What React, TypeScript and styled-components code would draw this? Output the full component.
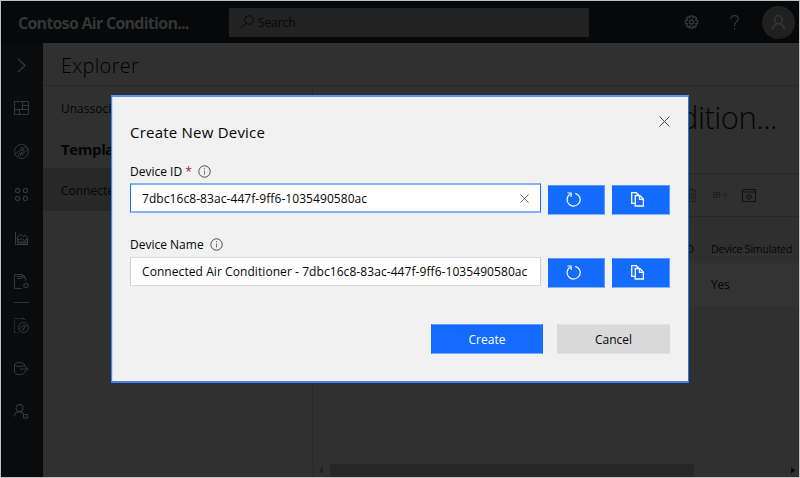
import React from "react";
import styled, { createGlobalStyle } from "styled-components";

const GlobalStyle = createGlobalStyle`
  * { box-sizing: border-box; }
  html, body { margin: 0; padding: 0; overflow: hidden; background: #303030; }
  body { font-family: "Open Sans", "Noto Sans", sans-serif; font-size: 12px; color: #000; }
  button, input { font-family: inherit; margin: 0; }
  svg { display: block; flex: none; }
`;

type TextProps = { $size: number; $spacing?: number; $weight?: number; $color?: string; $shift?: number };

const Text = styled.span<TextProps>`
  display: block;
  white-space: nowrap;
  line-height: 20px;
  font-size: ${(p) => p.$size}px;
  letter-spacing: ${(p) => p.$spacing ?? 0}px;
  font-weight: ${(p) => p.$weight ?? 400};
  color: ${(p) => p.$color ?? "#050505"};
  margin-top: ${(p) => p.$shift ?? 0}px;
`;

const Frame = styled.div`
  position: relative;
  width: 800px;
  height: 478px;
  border: 1px solid #bfc1c1;
  display: flex;
  flex-direction: column;
  overflow: hidden;
`;

const Header = styled.header`
  height: 42px;
  flex: none;
  display: flex;
  align-items: center;
  background: #060809;
`;

const Brand = styled.div`
  width: 228px;
  padding-left: 17px;
`;

const SearchBox = styled.div`
  width: 360px;
  height: 29px;
  display: flex;
  align-items: center;
  gap: 4px;
  padding-left: 11px;
  background: #222;
  border-radius: 1px;
`;

const HeaderActions = styled.div`
  flex: 1;
  display: flex;
  justify-content: flex-end;
  align-items: center;
  padding-right: 4px;
`;

const HelpSlot = styled.div`
  width: 9px;
  margin: 0 23px 0 31px;
`;

const Avatar = styled.div`
  width: 33px;
  height: 33px;
  border-radius: 50%;
  background: #202020;
  display: flex;
  align-items: center;
  justify-content: center;
`;

const Body = styled.div`
  flex: 1;
  display: flex;
  min-height: 0;
`;

const Rail = styled.nav`
  width: 42px;
  flex: none;
  background: #090b0d;
  display: flex;
  flex-direction: column;
  align-items: center;
  padding-right: 2px;
`;

const RailItem = styled.div<{ $height?: number }>`
  height: ${(p) => p.$height ?? 43}px;
  flex: none;
  display: flex;
  align-items: center;
`;

const RailDivider = styled.div`
  width: 15px;
  height: 1px;
  flex: none;
  background: #303030;
`;

const Workspace = styled.div`
  flex: 1;
  display: flex;
  flex-direction: column;
  background: #303030;
  min-width: 0;
`;

const PageTitle = styled.div`
  height: 43px;
  border-bottom: 1px solid #292929;
  padding: 13px 0 0 18px;
`;

const Columns = styled.div`
  flex: 1;
  display: flex;
  min-height: 0;
`;

const TemplateList = styled.div`
  width: 270px;
  flex: none;
  border-right: 1px solid #292929;
`;

const TemplateRow = styled.div<{ $height: number; $selected?: boolean }>`
  height: ${(p) => p.$height}px;
  display: flex;
  align-items: center;
  padding-left: 18px;
  background: ${(p) => (p.$selected ? "#282828" : "transparent")};
`;

const DevicePane = styled.div`
  flex: 1;
  display: flex;
  flex-direction: column;
  min-width: 0;
`;

const DeviceTitle = styled.div`
  height: 87px;
  display: flex;
  justify-content: flex-end;
  align-items: flex-start;
  padding: 21px 22px 0 0;
`;

const Toolbar = styled.div`
  height: 44px;
  border-top: 1px solid #282828;
  border-bottom: 1px solid #282828;
  display: flex;
  align-items: center;
  justify-content: flex-end;
  gap: 14px;
  padding-right: 43px;
`;

const TrashSlot = styled.div`
  margin-right: 2px;
`;

const TableRow = styled.div<{ $height: number; $body?: boolean }>`
  height: ${(p) => p.$height}px;
  display: grid;
  grid-template-columns: 1fr 88px;
  align-items: center;
  background: ${(p) => (p.$body ? "#333333" : "#2f2f2f")};
`;

const IdCell = styled.div`
  display: flex;
  justify-content: flex-end;
  padding-right: 17px;
`;

const Scrollbar = styled.div`
  margin-top: auto;
  height: 14px;
  display: flex;
  align-items: center;
  padding: 0 4px 0 6px;
`;

const Thumb = styled.div`
  width: 364px;
  height: 13px;
  margin: 0 auto 0 7px;
  background: #262626;
`;

const Dialog = styled.section`
  position: absolute;
  left: 110px;
  top: 94px;
  width: 578px;
  height: 288px;
  background: #f1f1f1;
  border: 2px solid;
  border-color: #5b93f2 #2471f8 #4484ec #4484ec;
  border-left-width: 1px;
  border-right-width: 1px;
  box-shadow: inset 1px 0 #c8dcfc;
  padding: 15px 18px 0 18px;
`;

const DialogTop = styled.div`
  height: 48px;
  display: flex;
  justify-content: space-between;
  align-items: flex-start;
`;

const CloseButton = styled.button`
  border: 0;
  background: none;
  padding: 4px 0 0;
`;

const FieldLabel = styled.label<{ $raised?: boolean }>`
  height: 23px;
  padding-bottom: ${(p) => (p.$raised ? 2 : 0)}px;
  display: flex;
  align-items: center;
`;

const Required = styled.span`
  width: 7px;
  margin-left: 3px;
  line-height: 20px;
  font-size: 12px;
  color: #a4262c;
`;

const InfoSlot = styled.span`
  margin-left: 6px;
`;

const FieldRow = styled.div<{ $height: number }>`
  height: ${(p) => p.$height}px;
  display: flex;
  align-items: flex-start;
`;

const InputBox = styled.div<{ $focused?: boolean }>`
  width: 411px;
  height: ${(p) => (p.$focused ? 30 : 29)}px;
  display: flex;
  align-items: center;
  justify-content: space-between;
  padding: 0 11px 0 11px;
  background: #fff;
  border-style: solid;
  border-width: ${(p) => (p.$focused ? "2px 1px" : "1px")};
  border-color: ${(p) => (p.$focused ? "#85b2fc #1a6efc" : "#dadada #cecece")};
`;

const IconButton = styled.button<{ $width: number; $top: number }>`
  width: ${(p) => p.$width}px;
  height: 30px;
  margin: ${(p) => p.$top}px 0 0 7px;
  display: flex;
  align-items: center;
  justify-content: center;
  padding: 0 7px 1px 0;
  border: 1px solid;
  border-color: #5d9aff #5d9aff #8cb5fb #136cff;
  background: #136cff;
`;

const DialogActions = styled.div`
  display: flex;
  justify-content: flex-end;
  gap: 14px;
`;

const ActionButton = styled.button<{ $primary?: boolean }>`
  width: ${(p) => (p.$primary ? 112 : 113)}px;
  height: 30px;
  padding: 1px 0 0;
  display: flex;
  align-items: center;
  justify-content: center;
  border: 1px solid;
  border-color: ${(p) => (p.$primary ? "#5d9aff #136cff #7aabfc" : "#e3e3e3 #d9d9d9")};
  background: ${(p) => (p.$primary ? "#136cff" : "#d9d9d9")};
`;

const Icon = ({ w, h, color = "#363838", sw = 1, vb, children }: {
  w: number; h: number; color?: string; sw?: number; vb?: string; children: React.ReactNode;
}) => (
  <svg width={w} height={h} viewBox={vb ?? `0 0 ${w} ${h}`} fill="none" stroke={color} strokeWidth={sw}>
    {children}
  </svg>
);

const Gear = ({ size, color }: { size: number; color: string }) => (
  <Icon w={size} h={size} color={color} sw={1.3}>
    <path d="M6.3.8h2.400l.4 2 1.700-1.200 1.800 1.800-1.200 1.700 2.100.4v2.900l-2.100.4 1.200 1.700-1.800 1.800-1.700-1.200-.4 2.100H6.300l-.4-2.100-1.700 1.200-1.800-1.800 1.200-1.700-2.100-.4V5.500l2.100-.4-1.200-1.700 1.800-1.800 1.700 1.200z" />
    <circle cx="7.5" cy="7" r="2" />
  </Icon>
);

const Cross = ({ size, color }: { size: number; color: string }) => (
  <Icon w={size} h={size} vb="0 0 11 11" color={color}><path d="M.5.5l10 10M10.5.5l-10 10" /></Icon>
);

const Info = () => (
  <Icon w={13} h={13} color="#4b4b4b">
    <circle cx="6.5" cy="6.5" r="5.7" />
    <path d="M6.5 5.500v4M6.5 3v1.300" stroke="#777" />
  </Icon>
);

const RefreshIcon = () => (
  <Icon w={15} h={15} color="#fff" sw={1.2}>
    <path d="M9.300 1.300A6.500 6.500 0 1 1 4.300 2" />
    <path d="M1.500 1h3.600v4" />
  </Icon>
);

const CopyIcon = () => (
  <Icon w={13} h={15} color="#fff" sw={1.3}>
    <path d="M4 11.400H.7V.7h4.600L7.600 3" />
    <path d="M4.300 3.500h4.500l3.600 3.600v6.900H4.300z" />
    <path d="M8.500 3.700v3.700h3.700" />
  </Icon>
);

const Field = ({ label, value, required, focused, spacing }: {
  label: string; value: string; required?: boolean; focused?: boolean; spacing: number;
}) => (
  <>
    <FieldLabel $raised={!focused}>
      <Text $size={12}>{label}</Text>
      {required && <Required>*</Required>}
      <InfoSlot><Info /></InfoSlot>
    </FieldLabel>
    <FieldRow $height={focused ? 51 : 67}>
      <InputBox $focused={focused}>
        <Text $size={12} $spacing={spacing} $shift={1}>{value}</Text>
        {focused && <Cross size={9} color="#555" />}
      </InputBox>
      <IconButton $width={57} $top={focused ? 2 : 1} aria-label={`Regenerate ${label}`}><RefreshIcon /></IconButton>
      <IconButton $width={58} $top={focused ? 2 : 1} aria-label={`Copy ${label}`}><CopyIcon /></IconButton>
    </FieldRow>
  </>
);

export default function App() {
  return (
    <Frame>
      <GlobalStyle />
      <Header>
        <Brand><Text $size={16} $spacing={-0.74} $weight={700} $color="#343636" $shift={1}>Contoso Air Condition...</Text></Brand>
        <SearchBox>
          <Icon w={14} h={14} color="#080808"><circle cx="9" cy="5" r="4.3" /><path d="M6 8L.5 13.500" /></Icon>
          <Text $size={12} $spacing={-0.1} $color="#080808" $shift={2}>Search</Text>
        </SearchBox>
        <HeaderActions>
          <Gear size={15} color="#363838" />
          <HelpSlot>
            <Icon w={9} h={15} sw={1.2}><path d="M.7 3.800C1 1.700 2.300.7 4.500.7c2.300 0 3.700 1.200 3.700 3.100 0 3-3.700 3.300-3.700 6.200v1M4.500 13v1.600" /></Icon>
          </HelpSlot>
          <Avatar>
            <Icon w={13} h={15} color="#383a3a" sw={1.3}><circle cx="6.5" cy="4.7" r="4" /><path d="M.7 14.500c0-3.600 2.500-5.800 5.800-5.800s5.800 2.200 5.800 5.800" /></Icon>
          </Avatar>
        </HeaderActions>
      </Header>
      <Body>
        <Rail>
          <RailItem $height={44}><Icon w={9} h={15} sw={1.2}><path d="M1 .7l7 6.800-7 6.800" /></Icon></RailItem>
          <RailItem $height={42}><Icon w={15} h={14}><path d="M.5.5h14v13H.5zM8.500.5v8M.5 8.500h14M5.500 8.500v5M8.500 4.500h6" /></Icon></RailItem>
          <RailItem $height={44}>
            <Icon w={15} h={15}><circle cx="7.5" cy="7.5" r="7" /><circle cx="8" cy="4.7" r="1.3" /><circle cx="7.5" cy="10.5" r="1.3" /><path d="M1 10l6-4.300M12.500 2L9 5.500v2L4.500 10.500v2M8.500 9.700L14 5.500" /></Icon>
          </RailItem>
          <RailItem>
            <Icon w={13} h={13} sw={1.1}>{[2.6, 10.4].map((x) => [2.6, 10.4].map((y) => <circle key={`${x}-${y}`} cx={x} cy={y} r="2.1" />))}</Icon>
          </RailItem>
          <RailItem $height={44}>
            <Icon w={13} h={13} color="#3a3b3b"><path d="M.5 0v12.500H13" /><path d="M2.500 11V5l3-3 2.500 2.500 2-1.500 2.500 2.500V11z" /><path d="M2.500 7l2 1 2-1.500 3 2 3-1.500M3 10h9" /></Icon>
          </RailItem>
          <RailItem $height={42}>
            <Icon w={15} h={15}><path d="M8 14.500H.5V.5h8l3 3V7M2.500 2.500h6M3 4.500h5M8.500.5v3h3" /><circle cx="12" cy="11.5" r="2" /><path d="M12 8.500v1M12 13.500v1M9 11.500h1M14 11.500h1M10 9.500l.6.6M14 9.500l-.6.6M10 13.500l.6-.6M14 13.500l-.6-.6" /></Icon>
          </RailItem>
          <RailDivider />
          <RailItem $height={44}>
            <Icon w={15} h={15}><path d="M9 .5H.5V14.500H4" strokeDasharray="1.5 1" /><circle cx="9.5" cy="9.5" r="5" /><circle cx="10" cy="7.5" r=".7" /><circle cx="9" cy="11.5" r=".7" /><path d="M5 11l4.500-3.500M13 7l-4 4.500M9 .5l2 1.500" /></Icon>
          </RailItem>
          <RailItem>
            <Icon w={15} h={13}><ellipse cx="5.5" cy="2.5" rx="5" ry="2" /><path d="M.5 2.500v8c0 1.200 2.200 2 5 2s5-.8 5-2V9.500M10.500 2.500v2M6 7h8M11 4l3 3-3 3" /></Icon>
          </RailItem>
          <RailItem>
            <Icon w={14} h={15} sw={1.1}><circle cx="5.5" cy="4" r="3.4" /><path d="M.6 12.500C.6 9.500 2.500 7.600 5.500 7.600c2 0 3 .8 4 2M9.500 10.500h4v3.500h-4z" /></Icon>
          </RailItem>
        </Rail>
        <Workspace>
          <PageTitle><Text $size={20} $spacing={0.3} $weight={300} $color="#000">Explorer</Text></PageTitle>
          <Columns>
            <TemplateList>
              <TemplateRow $height={44}><Text $size={12} $spacing={0} $shift={1}>Unassociated devices</Text></TemplateRow>
              <TemplateRow $height={38}><Text $size={15} $spacing={-0.4} $weight={700}>Templates</Text></TemplateRow>
              <TemplateRow $height={43} $selected><Text $size={12} $spacing={0} $shift={2}>Connected Air Conditioner</Text></TemplateRow>
            </TemplateList>
            <DevicePane>
              <DeviceTitle><Text $size={31} $spacing={-0.5} $weight={300}>Connected Air Condition...</Text></DeviceTitle>
              <Toolbar>
                <TrashSlot>
                  <Icon w={11} h={14} color="#202020"><path d="M0 2.500h11M3.500 2V.5h4V2M1.500 3v10.500h8V3M3.500 5v6.500M5.500 5v6.500M7.500 5v6.500" /></Icon>
                </TrashSlot>
                <Icon w={15} h={9} color="#202020"><path d="M.5 1.500h6v5h-6zM3.500 1.500v5M.5 4h6M8 4h6M11.500 1.500L14 4l-2.500 2.500" /></Icon>
                <Icon w={14} h={13} color="#101010"><path d="M.5.5h13v12H.5zM.5 3h13" /><circle cx="7" cy="7.7" r="2" /><path d="M7 5v1M7 9.500v1M4.500 7.700h1M8.700 7.700h1" /></Icon>
              </Toolbar>
              <TableRow $height={46}>
                <IdCell><Text $size={10.5} $shift={18}>Device ID</Text></IdCell>
                <Text $size={10.5} $spacing={-0.18} $shift={18}>Device Simulated</Text>
              </TableRow>
              <TableRow $height={43} $body><IdCell /><Text $size={12} $shift={1} $spacing={-0.2}>Yes</Text></TableRow>
              <Scrollbar>
                <Icon w={4} h={7}><path d="M4 0v7L0 3.500z" fill="#202020" stroke="none" /></Icon>
                <Thumb />
                <Icon w={4} h={7}><path d="M0 0v7l4-3.500z" fill="#0c0c0c" stroke="none" /></Icon>
              </Scrollbar>
            </DevicePane>
          </Columns>
        </Workspace>
      </Body>
      <Dialog role="dialog" aria-label="Create New Device">
        <DialogTop>
          <Text $size={15} $spacing={0.22} $shift={10}>Create New Device</Text>
          <CloseButton aria-label="Close"><Cross size={11} color="#444" /></CloseButton>
        </DialogTop>
        <Field label="Device ID" value="7dbc16c8-83ac-447f-9ff6-1035490580ac" spacing={0.07} required focused />
        <Field label="Device Name" value="Connected Air Conditioner - 7dbc16c8-83ac-447f-9ff6-1035490580ac" spacing={0.07} />
        <DialogActions>
          <ActionButton $primary><Text $size={12} $color="#fff">Create</Text></ActionButton>
          <ActionButton><Text $size={12}>Cancel</Text></ActionButton>
        </DialogActions>
      </Dialog>
    </Frame>
  );
}
